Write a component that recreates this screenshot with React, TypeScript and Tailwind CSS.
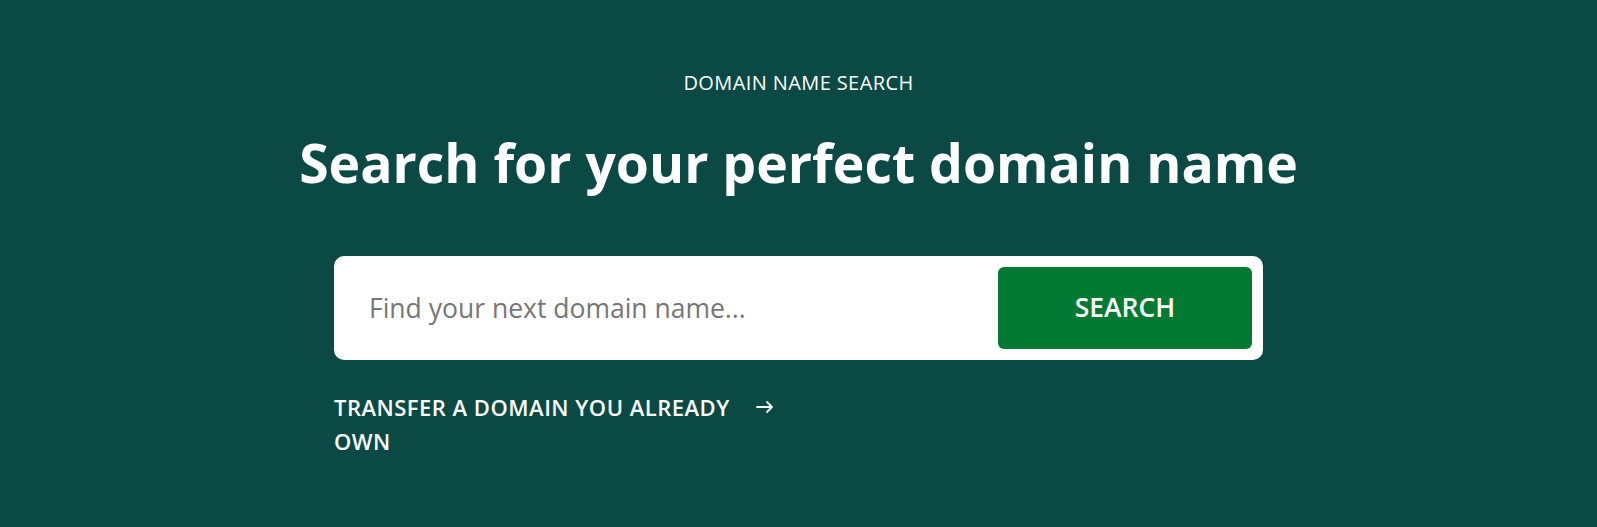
export default function App() {
  return (
    <div
      className="min-h-[527px] w-full bg-[#0b4a44] text-white"
      style={{ fontFamily: '"Open Sans", "Noto Sans", sans-serif' }}
    >
      <div className="flex flex-col items-center pt-[69px]">
        <p className="text-[20px] leading-[28px] tracking-[0.4px]">DOMAIN NAME SEARCH</p>
        <h1 className="mt-[34px] text-[53.5px] font-bold leading-[64px]">
          Search for your perfect domain name
        </h1>

        <div className="mt-[61px] w-[929px]">
          <form className="flex h-[104px] items-center rounded-[10px] bg-white py-[11px] pr-[11px]">
            <input
              type="text"
              placeholder="Find your next domain name..."
              className="h-full flex-1 bg-transparent pl-[35px] text-[26.5px] text-[#333] outline-none placeholder:text-[#767676]"
            />
            <button
              type="button"
              className="h-[82px] w-[254px] rounded-[6px] bg-[#037a33] text-[26.5px] font-semibold text-white"
            >
              SEARCH
            </button>
          </form>

          <a href="#" className="mt-[30px] flex items-start gap-[18px]">
            <span className="w-[404px] text-[22px] font-semibold leading-[34px] tracking-[0.5px]">
              TRANSFER A DOMAIN YOU ALREADY OWN
            </span>
            <svg
              width="18"
              height="12"
              viewBox="0 0 18 12"
              fill="none"
              stroke="currentColor"
              strokeWidth="1.8"
              strokeLinecap="round"
              strokeLinejoin="round"
              className="mt-[11px]"
            >
              <path d="M1 6h15M11 1l5 5-5 5" />
            </svg>
          </a>
        </div>
      </div>
    </div>
  );
}
